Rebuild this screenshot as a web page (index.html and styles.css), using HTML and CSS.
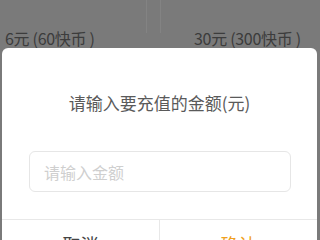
FILE: index.html
```html
<!DOCTYPE html>
<html lang="zh">
<head>
<meta charset="utf-8">
<link rel="stylesheet" href="styles.css">
</head>
<body>
<div class="page">
  <div class="row">
    <div class="cell left"><span class="price">6元 (60快币 )</span></div>
    <div class="cell right"><span class="price">30元 (300快币 )</span></div>
  </div>
</div>
<div class="dialog">
  <div class="title">请输入要充值的金额(元)</div>
  <div class="field"><span class="placeholder">请输入金额</span></div>
  <div class="actions">
    <div class="btn cancel">取消</div>
    <div class="btn ok">确认</div>
  </div>
</div>
</body>
</html>
```
FILE: styles.css
```css
html, body {
  margin: 0;
  padding: 0;
}
body {
  width: 320px;
  height: 240px;
  overflow: hidden;
  background: #7a7a7a;
  font-family: "Noto Sans CJK SC", "Liberation Sans", sans-serif;
  position: relative;
}
.page {
  height: 240px;
}
.row {
  display: flex;
  gap: 13px;
  height: 48px;
}
.cell {
  width: 147px;
  height: 33px;
  box-sizing: border-box;
  white-space: nowrap;
}
.cell.left {
  border-right: 1px solid #838383;
  padding: 26px 0 0 5px;
}
.cell.right {
  border-left: 1px solid #838383;
  padding: 26px 0 0 33px;
}
.price {
  font-size: 16px;
  line-height: 20px;
  color: #3c3c3c;
  letter-spacing: -0.3px;
}
.dialog {
  position: absolute;
  left: 2px;
  top: 48px;
  width: 315px;
  height: 220px;
  background: #fff;
  border-radius: 6px;
  box-sizing: border-box;
  padding-top: 42px;
}
.title {
  text-align: center;
  font-size: 17px;
  line-height: 26px;
  color: #5a5a5a;
}
.field {
  margin: 35px 26px 0 27px;
  height: 41px;
  box-sizing: border-box;
  border: 1px solid #e6e6e6;
  border-radius: 6px;
  padding-left: 14px;
  display: flex;
  align-items: center;
}
.placeholder {
  font-size: 16px;
  color: #cfcfcf;
}
.actions {
  margin-top: 27px;
  border-top: 1px solid #e8e8e8;
  display: flex;
}
.btn {
  flex: 1;
  height: 48px;
  line-height: 48px;
  text-align: center;
  font-size: 18px;
}
.cancel {
  border-right: 1px solid #e8e8e8;
  color: #444;
}
.ok {
  color: #f0a020;
}
```
